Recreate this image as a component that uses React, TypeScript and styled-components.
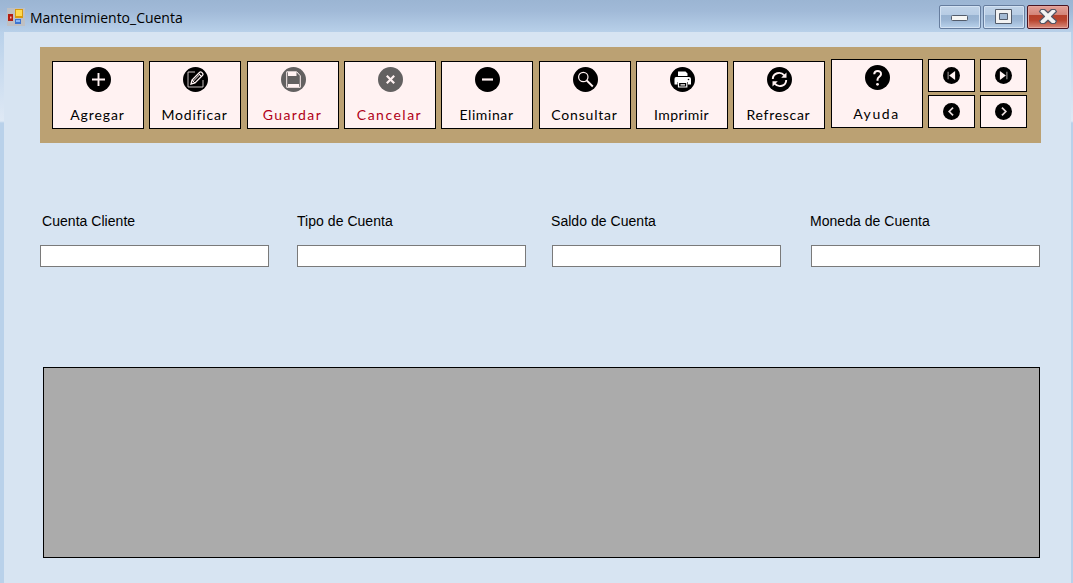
import React from 'react';
import styled, { createGlobalStyle } from 'styled-components';

const GlobalStyle = createGlobalStyle`
  *, *::before, *::after { box-sizing: border-box; }
  body { margin: 0; overflow: hidden; }
`;

const Window = styled.div`
  width: 1073px;
  height: 583px;
  display: flex;
  flex-direction: column;
  background: #b9d1ea;
  font-family: 'Microsoft Sans Serif', 'Liberation Sans', Arial, sans-serif;
  color: #000;
`;

const TitleBar = styled.header`
  flex: none;
  height: 32px;
  display: flex;
  align-items: flex-start;
  padding: 5px 4px 0 7px;
  background: linear-gradient(#9bb5d3 0%, #a1bad8 35%, #b8d0e9 100%);
`;

const AppIcon = styled.svg`
  flex: none;
  margin-top: 3px;
`;

const Title = styled.h1`
  flex: 1;
  margin: 1px 0 0 5px;
  font: 400 14px/24px 'Segoe UI', 'Open Sans', sans-serif;
  letter-spacing: -0.02px;
`;

const CaptionButtons = styled.div`
  display: flex;
  gap: 2px;
`;

const CaptionButton = styled.button<{ $danger?: boolean }>`
  width: 42px;
  height: 24px;
  padding: 0;
  display: flex;
  align-items: center;
  justify-content: center;
  border: 1px solid ${p => (p.$danger ? '#4a1522' : '#667d9e')};
  border-radius: 2px;
  box-shadow: inset 0 0 0 1px ${p => (p.$danger ? '#e6a69d' : '#d3e2f3')};
  background: ${p =>
    p.$danger
      ? 'linear-gradient(#e3a097 0%, #d38377 42%, #b6402b 43%, #b9452f 65%, #d88b7c 100%)'
      : 'linear-gradient(#c1d4e9 0%, #b7cce4 42%, #98b3d1 43%, #9cb6d4 65%, #b9d2ec 100%)'};
`;

const Frame = styled.div`
  flex: 1;
  display: flex;
  padding: 0 2px 0 4px;
  background: linear-gradient(#b9d1ea 0, #dfe9f5 89px, #b9d1ea 91px);
`;

const Form = styled.main`
  flex: 1;
  display: flex;
  flex-direction: column;
  padding: 15px 30px 0 36px;
  background: #d7e4f2;
`;

const Toolbar = styled.nav`
  width: 1001px;
  height: 96px;
  display: flex;
  align-items: flex-start;
  padding: 12px;
  background: #bba173;
`;

const ToolButton = styled.button<{ $gap: number; $raised?: boolean; $muted?: boolean }>`
  flex: none;
  width: 92px;
  height: ${p => (p.$raised ? 69 : 68)}px;
  margin: ${p => (p.$raised ? 0 : 2)}px ${p => p.$gap}px 0 0;
  padding: 5px 0 0;
  display: flex;
  flex-direction: column;
  align-items: center;
  gap: ${p => (p.$raised ? 14 : 13)}px;
  border: 1px solid #000;
  background: #fff2f2;
  color: ${p => (p.$muted ? '#b00018' : '#000')};
`;

const ToolLabel = styled.span<{ $tracking: number }>`
  font: 400 14px/20px 'Century Gothic', Lato, sans-serif;
  letter-spacing: ${p => p.$tracking}px;
  margin-right: 1px;
  white-space: nowrap;
`;

const Navigation = styled.div`
  display: grid;
  grid-template-columns: repeat(2, 47px);
  grid-auto-rows: 33px;
  gap: 3px 5px;
`;

const NavButton = styled.button`
  padding: 0 0 1px;
  display: flex;
  align-items: center;
  justify-content: center;
  border: 1px solid #000;
  background: #fff2f2;
`;

const Fields = styled.section`
  display: grid;
  grid-template-columns: 257px 255px 259px 229px;
  margin-top: 70px;
`;

const Field = styled.label`
  display: flex;
  flex-direction: column;
  gap: 15px;
`;

const FieldName = styled.span<{ $indent: number }>`
  font-size: 14px;
  line-height: 17px;
  letter-spacing: 0.04px;
  padding-left: ${p => Math.max(p.$indent, 0)}px;
  margin-left: ${p => Math.min(p.$indent, 0)}px;
`;

const TextBox = styled.input`
  width: 229px;
  height: 22px;
  border: 1px solid #7a7a7a;
  border-radius: 0;
  background: #fff;
  outline: none;
`;

const DataGrid = styled.section`
  width: 997px;
  height: 191px;
  margin: 100px 0 0 3px;
  border: 1px solid #000;
  background: #ababab;
`;

type IconName =
  | 'add' | 'edit' | 'save' | 'cancel' | 'remove' | 'search' | 'print' | 'refresh' | 'help'
  | 'first' | 'last' | 'previous' | 'next';

const glyphs: Record<IconName, React.ReactNode> = {
  add: <path d="M12.5 6v13M6 12.5h13" strokeWidth="1.9" />,
  edit: (
    <>
      <path d="M12 5H5v15h15V13" strokeWidth="1" stroke="#c9c0c0" />
      <path d="M8 17l1-4 7.700-7.700q1-.9 2 .1l.8.8q1 1 .1 2L12 16z" strokeWidth="1.300" />
      <path d="M10 14.500l7.300-7.500M9 13l3 3M15.500 6.500l3 3" strokeWidth="1" />
    </>
  ),
  save: (
    <>
      <path d="M5.700 4.800h10l3.600 4v11.500H5.700z" strokeWidth="1" />
      <path d="M7 5h8.500v4H7zM7 17h11v3H7z" fill="#fff2f2" stroke="none" />
    </>
  ),
  cancel: <path d="M8.800 8.800l7.400 7.400M16.200 8.800l-7.400 7.400" strokeWidth="2.200" />,
  remove: <path d="M7 12.500h11" strokeWidth="2.200" />,
  search: (
    <>
      <circle cx="10.300" cy="10" r="4.700" strokeWidth="1.200" />
      <path d="M13.800 13.500l6 6" strokeWidth="1.900" />
    </>
  ),
  print: (
    <>
      <path d="M8 4.500h7.500l2 2V9H8zM6 10h13q2 0 2 2v5.500h-3V15H7.500v2.500H4.500V12q0-2 1.500-2z" fill="#fff" stroke="none" />
      <path d="M8.500 15.500h8.300v4.500H8.500zM10.500 17.800h4.500" stroke="#fff" strokeWidth="1.200" />
      <circle cx="18.500" cy="12.500" r=".8" fill="#000" stroke="none" />
    </>
  ),
  refresh: (
    <>
      <path d="M5.800 12C5.800 5.800 13.500 4 17.300 8.300M19.200 13C19.200 19.200 11.500 21 7.700 16.700" strokeWidth="1.900" />
      <path d="M19.500 5.500v5.300h-5.300zM5.500 19.500v-5.300h5.300z" fill="#fff2f2" stroke="none" />
    </>
  ),
  help: (
    <>
      <path d="M9.200 9.300c.3-4.300 7-4.200 6.800-.2-.1 2.700-3.500 2.600-3.500 5.600v1.100" strokeWidth="2" />
      <circle cx="12.500" cy="19.300" r="1.400" fill="#fff2f2" stroke="none" />
    </>
  ),
  first: (
    <>
      <path d="M7.500 7v11" strokeWidth="1.500" stroke="#aaa2a2" />
      <path d="M17.800 6v13L9 12.500z" fill="#fff2f2" stroke="none" />
    </>
  ),
  last: (
    <>
      <path d="M17.500 7v11" strokeWidth="1.500" stroke="#aaa2a2" />
      <path d="M7.200 6v13l8.800-6.500z" fill="#fff2f2" stroke="none" />
    </>
  ),
  previous: <path d="M14.800 6.800l-5.700 5.700 5.700 5.700" strokeWidth="2.500" stroke="#e8dcdc" />,
  next: <path d="M10.200 6.800l5.700 5.700-5.700 5.700" strokeWidth="2.500" stroke="#e8dcdc" />,
};

const RoundSvg = styled.svg`
  flex: none;
`;

function RoundIcon({ name, size = 25, muted }: { name: IconName; size?: number; muted?: boolean }) {
  return (
    <RoundSvg width={size} height={size} viewBox="0 0 25 25" fill="none" stroke="#fff2f2">
      <circle cx="12.500" cy="12.500" r="12.500" fill={muted ? '#636161' : '#000'} stroke="none" />
      {glyphs[name]}
    </RoundSvg>
  );
}

interface Tool {
  icon: IconName;
  label: string;
  tracking: number;
  gap: number;
  muted?: boolean;
  raised?: boolean;
}

const tools: Tool[] = [
  { icon: 'add', label: 'Agregar', tracking: 0.9, gap: 5 },
  { icon: 'edit', label: 'Modificar', tracking: 0.8, gap: 6 },
  { icon: 'save', label: 'Guardar', tracking: 1.4, gap: 5, muted: true },
  { icon: 'cancel', label: 'Cancelar', tracking: 1.5, gap: 5, muted: true },
  { icon: 'remove', label: 'Eliminar', tracking: 0.6, gap: 6 },
  { icon: 'search', label: 'Consultar', tracking: 0.8, gap: 5 },
  { icon: 'print', label: 'Imprimir', tracking: 0.4, gap: 5 },
  { icon: 'refresh', label: 'Refrescar', tracking: 0.7, gap: 6 },
  { icon: 'help', label: 'Ayuda', tracking: 1.6, gap: 5, raised: true },
];

const navigation: { icon: IconName; label: string }[] = [
  { icon: 'first', label: 'Primero' },
  { icon: 'last', label: 'Último' },
  { icon: 'previous', label: 'Anterior' },
  { icon: 'next', label: 'Siguiente' },
];

const fields = [
  { name: 'Cuenta Cliente', indent: 2 },
  { name: 'Tipo de Cuenta', indent: 0 },
  { name: 'Saldo de Cuenta', indent: -1 },
  { name: 'Moneda de Cuenta', indent: -1 },
];

export default function App() {
  return (
    <>
      <GlobalStyle />
      <Window>
        <TitleBar>
          <AppIcon width="18" height="18" viewBox="0 0 18 18">
            <path d="M0 0h18v18H0z" fill="#bfc0c3" />
            <path d="M1 6h5v7H1z" fill="#b51d12" />
            <path d="M3 8.500h1.500v2H3z" fill="#f5b5a5" />
            <path d="M8 1h8v9H8z" fill="#d99a0c" />
            <path d="M9 2h6v6H9z" fill="#ffd94f" />
            <path d="M8 11h6v5H8z" fill="#3c75d2" />
            <path d="M9 12h4v2H9z" fill="#8bb7f4" />
          </AppIcon>
          <Title>Mantenimiento_Cuenta</Title>
          <CaptionButtons>
            <CaptionButton aria-label="Minimizar">
              <svg width="18" height="16" viewBox="0 0 18 16">
                <rect x=".5" y="6.500" width="16" height="5" rx="1" fill="#f6f6f4" stroke="#535c6b" />
              </svg>
            </CaptionButton>
            <CaptionButton aria-label="Maximizar">
              <svg width="18" height="16" viewBox="0 0 18 16">
                <path d="M.5.500h16v14H.5z" fill="#f2f2f2" stroke="#535c6b" />
                <path d="M4.500 4.500h8v6h-8z" fill="#a4bad3" stroke="#535c6b" />
              </svg>
            </CaptionButton>
            <CaptionButton $danger aria-label="Cerrar">
              <svg width="20" height="18" viewBox="0 0 20 18">
                <path
                  d="M3 1.500h3.500L10 4.800l3.500-3.300H17l1.500 2L13.500 8.500l5 4.500-1.500 2.500h-3.500L10 12.200l-3.500 3.300H3L1.500 13l5-4.500-5-5z"
                  fill="#f3f3f3"
                  stroke="#535666"
                  strokeWidth="1.200"
                  strokeLinejoin="round"
                />
              </svg>
            </CaptionButton>
          </CaptionButtons>
        </TitleBar>
        <Frame>
          <Form>
            <Toolbar>
              {tools.map(t => (
                <ToolButton key={t.label} $gap={t.gap} $raised={t.raised} $muted={t.muted}>
                  <RoundIcon name={t.icon} muted={t.muted} />
                  <ToolLabel $tracking={t.tracking}>{t.label}</ToolLabel>
                </ToolButton>
              ))}
              <Navigation>
                {navigation.map(n => (
                  <NavButton key={n.icon} aria-label={n.label}>
                    <RoundIcon name={n.icon} size={17} />
                  </NavButton>
                ))}
              </Navigation>
            </Toolbar>
            <Fields>
              {fields.map(f => (
                <Field key={f.name}>
                  <FieldName $indent={f.indent}>{f.name}</FieldName>
                  <TextBox />
                </Field>
              ))}
            </Fields>
            <DataGrid />
          </Form>
        </Frame>
      </Window>
    </>
  );
}
